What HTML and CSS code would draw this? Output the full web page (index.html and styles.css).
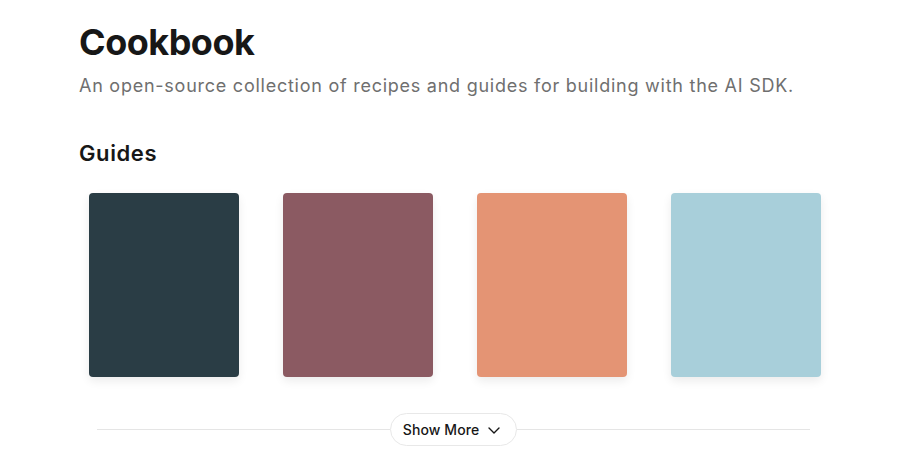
FILE: index.html
```html
<!DOCTYPE html>
<html lang="en">
<head>
<meta charset="utf-8">
<link rel="stylesheet" href="styles.css">
</head>
<body>
<main class="page">
  <header class="intro">
    <h1 class="title">Cookbook</h1>
    <p class="subtitle">An open-source collection of recipes and guides for building with the AI SDK.</p>
  </header>
  <section class="guides">
    <h2 class="section-title">Guides</h2>
    <div class="cards">
      <div class="card card-1"></div>
      <div class="card card-2"></div>
      <div class="card card-3"></div>
      <div class="card card-4"></div>
    </div>
    <div class="more">
      <span class="rule"></span>
      <button class="more-btn">Show More
        <svg width="16" height="16" viewBox="0 0 16 16" fill="none" stroke="currentColor" stroke-width="1.4" stroke-linecap="round" stroke-linejoin="round"><path d="M3 6l5 5 5-5"/></svg>
      </button>
      <span class="rule"></span>
    </div>
  </section>
</main>
</body>
</html>
```
FILE: styles.css
```css
* { box-sizing: border-box; }
html, body { margin: 0; background: #fff; }
body { font-family: Inter, "Noto Sans", sans-serif; color: #171717; }
.page { padding: 20px 0 0 79px; width: 831px; }
.title { margin: 0; font-size: 36px; line-height: 44px; font-weight: 700; letter-spacing: -0.5px; }
.subtitle { margin: 8px 0 0; font-size: 18px; line-height: 28px; color: #6f6f6f; letter-spacing: 0.75px; }
.section-title { margin: 38px 0 0; font-size: 22px; line-height: 30px; font-weight: 600; letter-spacing: 0.6px; }
.cards { display: flex; gap: 44px; padding: 0 10px; margin-top: 25px; }
.card { width: 150px; height: 184px; border-radius: 4px; box-shadow: 0 4px 10px rgba(0,0,0,0.08); }
.card-1 { background: #2a3d45; }
.card-2 { background: #8b5a62; }
.card-3 { background: #e49474; }
.card-4 { background: #a8cfda; }
.more { display: flex; align-items: center; margin: 36px 21px 0 18px; }
.rule { flex: 1; height: 1px; background: #e5e5e5; }
.more-btn { display: flex; align-items: center; gap: 7px; height: 33px; padding: 0 14px 0 12px; border: 1px solid #e8e8e8; border-radius: 999px; background: #fff; font-family: inherit; font-size: 14px; font-weight: 500; letter-spacing: 0.1px; color: #171717; }
```
